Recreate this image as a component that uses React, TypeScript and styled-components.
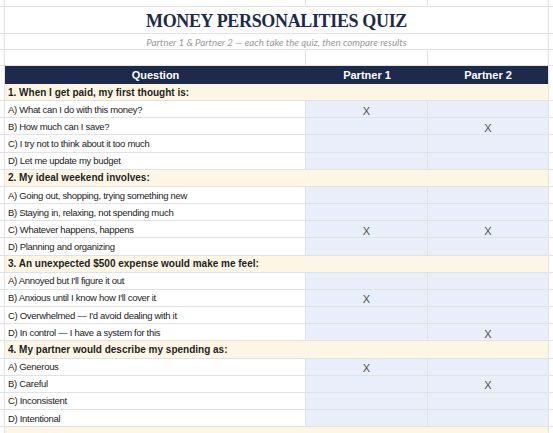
import React from 'react';
import styled, { createGlobalStyle } from 'styled-components';

const LINE = '#e2e2e2';
const NAVY = '#1c2a4b';

const Global = createGlobalStyle`
  html, body { margin: 0; padding: 0; background: #ffffff; }
  body { font-family: "Liberation Sans", Arial, sans-serif; }
`;

const Sheet = styled.div`
  width: 553px;
  display: flex;
  flex-direction: column;
  background: #ffffff;
`;

const Row = styled.div<{ $h: number; $noBottom?: boolean }>`
  display: grid;
  grid-template-columns: 5px 301px 122px 121px 1fr;
  height: ${(p) => p.$h}px;
  box-sizing: border-box;
  border-bottom: ${(p) => (p.$noBottom ? 'none' : `1px solid ${LINE}`)};
`;

const Cell = styled.div<{ $bg?: string; $span?: number; $noRight?: boolean }>`
  box-sizing: border-box;
  background: ${(p) => p.$bg || '#ffffff'};
  border-right: ${(p) => (p.$noRight ? 'none' : `1px solid ${LINE}`)};
  grid-column: ${(p) => (p.$span ? `span ${p.$span}` : 'auto')};
  min-width: 0;
  overflow: hidden;
  white-space: nowrap;
`;

const TitleCell = styled(Cell)`
  display: flex;
  align-items: center;
  justify-content: center;
  font-family: "Liberation Serif", "Times New Roman", serif;
  font-weight: 700;
  font-size: 18px;
  color: ${NAVY};
  letter-spacing: -0.35px;
  padding-top: 2px;
`;

const SubtitleCell = styled(Cell)`
  display: flex;
  align-items: center;
  justify-content: center;
  font-family: Lato, "Open Sans", sans-serif;
  font-style: italic;
  font-size: 9.75px;
  color: #999999;
`;

const HeadCell = styled(Cell)`
  background: ${NAVY};
  color: #ffffff;
  font-weight: 700;
  font-size: 11px;
  display: flex;
  align-items: center;
  justify-content: center;
`;

const SectionCell = styled(Cell)`
  background: #fef6e5;
  font-weight: 700;
  font-size: 10px;
  color: #1f1f1f;
  display: flex;
  align-items: center;
  padding-left: 3px;
`;

const OptionCell = styled(Cell)`
  font-size: 9.5px;
  letter-spacing: -0.3px;
  color: #222222;
  display: flex;
  align-items: center;
  padding-left: 3px;
`;

const MarkCell = styled(Cell)`
  background: #e8eefa;
  font-size: 11px;
  color: #505050;
  display: flex;
  align-items: center;
  justify-content: center;
  padding-top: 3px;
`;

type Opt = { text: string; p1: boolean; p2: boolean };
type Section = { q: string; options: Opt[] };

const o = (text: string, p1 = false, p2 = false): Opt => ({ text, p1, p2 });

const sections: Section[] = [
  {
    q: '1. When I get paid, my first thought is:',
    options: [
      o('A) What can I do with this money?', true),
      o('B) How much can I save?', false, true),
      o('C) I try not to think about it too much'),
      o('D) Let me update my budget'),
    ],
  },
  {
    q: '2. My ideal weekend involves:',
    options: [
      o('A) Going out, shopping, trying something new'),
      o('B) Staying in, relaxing, not spending much'),
      o('C) Whatever happens, happens', true, true),
      o('D) Planning and organizing'),
    ],
  },
  {
    q: '3. An unexpected $500 expense would make me feel:',
    options: [
      o("A) Annoyed but I'll figure it out"),
      o("B) Anxious until I know how I'll cover it", true),
      o("C) Overwhelmed — I'd avoid dealing with it"),
      o('D) In control — I have a system for this', false, true),
    ],
  },
  {
    q: '4. My partner would describe my spending as:',
    options: [
      o('A) Generous', true),
      o('B) Careful', false, true),
      o('C) Inconsistent'),
      o('D) Intentional'),
    ],
  },
];

const ROW_H = 17.16;

export default function App() {
  return (
    <>
      <Global />
      <Sheet>
        <Row $h={7}>
          <Cell />
          <Cell />
          <Cell />
          <Cell />
          <Cell $noRight />
        </Row>
        <Row $h={27}>
          <Cell />
          <TitleCell $span={3}>MONEY PERSONALITIES QUIZ</TitleCell>
          <Cell $noRight />
        </Row>
        <Row $h={16}>
          <Cell />
          <SubtitleCell $span={3}>
            Partner 1 &amp; Partner 2 — each take the quiz, then compare results
          </SubtitleCell>
          <Cell $noRight />
        </Row>
        <Row $h={16}>
          <Cell />
          <Cell />
          <Cell />
          <Cell />
          <Cell $noRight />
        </Row>
        <Row $h={18} $noBottom>
          <Cell />
          <HeadCell $noRight>Question</HeadCell>
          <HeadCell $noRight>Partner 1</HeadCell>
          <HeadCell>Partner 2</HeadCell>
          <Cell $noRight />
        </Row>
        {sections.map((s) => (
          <React.Fragment key={s.q}>
            <Row $h={ROW_H}>
              <Cell />
              <SectionCell $span={3}>{s.q}</SectionCell>
              <Cell $noRight />
            </Row>
            {s.options.map((op) => (
              <Row $h={ROW_H} key={op.text}>
                <Cell />
                <OptionCell>{op.text}</OptionCell>
                <MarkCell>{op.p1 ? 'X' : ''}</MarkCell>
                <MarkCell>{op.p2 ? 'X' : ''}</MarkCell>
                <Cell $noRight />
              </Row>
            ))}
          </React.Fragment>
        ))}
        <Row $h={ROW_H}>
          <Cell />
          <SectionCell $span={3} />
          <Cell $noRight />
        </Row>
      </Sheet>
    </>
  );
}
